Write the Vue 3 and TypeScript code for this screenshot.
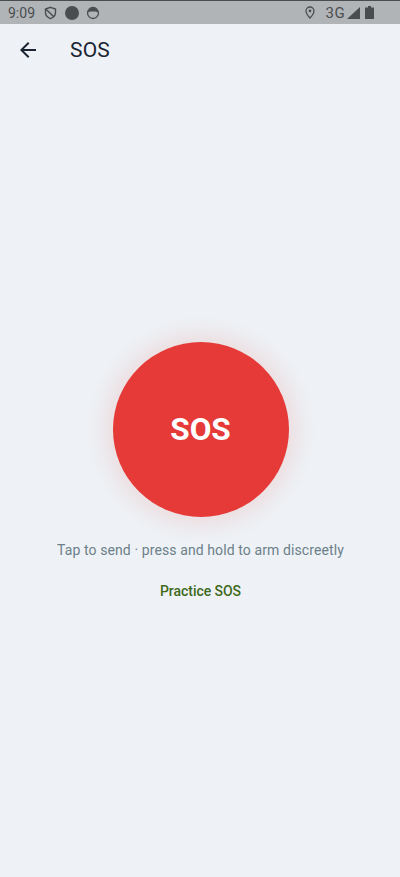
<script setup lang="ts">
const title = 'SOS'
</script>

<template>
  <div class="screen">
    <div class="status">
      <div class="status-left">
        <span class="time">9:09</span>
        <svg class="s-icon shield" width="13" height="14" viewBox="0 0 13 14">
          <path d="M6.500 1.300 11.500 3v3.600c0 2.900-2 5-5 6.100-3-1.100-5-3.200-5-6.100V3z" fill="none" stroke="#4a4d50" stroke-width="1.400" />
          <path d="M2 3.200 9.800 10.800" stroke="#4a4d50" stroke-width="1.400" />
        </svg>
        <span class="dot"></span>
        <svg class="s-icon" width="14" height="14" viewBox="0 0 14 14">
          <circle cx="7" cy="7" r="5.500" fill="none" stroke="#4a4d50" stroke-width="1.300" />
          <path d="M2 6.300C2.400 3.500 4.500 1.800 7 1.800s4.600 1.700 5 4.500c-.9.300-1.500-.8-2.400-.8H4.400c-.9 0-1.500 1.100-2.400.8z" fill="#4a4d50" />
        </svg>
      </div>
      <div class="status-right">
        <svg width="10" height="13" viewBox="0 0 10 13">
          <path d="M5 1C2.800 1 1 2.700 1 4.900 1 7.600 5 12 5 12s4-4.400 4-7.100C9 2.700 7.200 1 5 1z" fill="none" stroke="#4a4d50" stroke-width="1.300" />
          <circle cx="5" cy="4.900" r="1.300" fill="#4a4d50" />
        </svg>
        <span class="net">3G</span>
        <svg class="signal" width="13" height="12" viewBox="0 0 13 12"><path d="M13 0V12H0z" fill="#4a4d50" /></svg>
        <svg class="battery" width="9" height="13" viewBox="0 0 9 13"><path d="M3 0h3v1.500h3V13H0V1.500h3z" fill="#4a4d50" /></svg>
      </div>
    </div>
    <header class="bar">
      <svg class="back" width="24" height="24" viewBox="0 0 24 24">
        <path d="M20 11H7.830l5.590-5.590L12 4l-8 8 8 8 1.410-1.410L7.830 13H20z" fill="#1b2433" />
      </svg>
      <span class="title">{{ title }}</span>
    </header>
    <main class="content">
      <button class="sos" type="button">SOS</button>
      <p class="hint">Tap to send · press and hold to arm discreetly</p>
      <a class="practice">Practice SOS</a>
    </main>
  </div>
</template>

<style scoped>
.screen {
  width: 400px;
  height: 877px;
  background: #eef2f6;
  display: flex;
  flex-direction: column;
  font-family: Roboto, "Liberation Sans", sans-serif;
  overflow: hidden;
}
.status {
  height: 24px;
  box-sizing: border-box;
  border-top: 1px solid #4a4c4e;
  background: #b1b4b7;
  display: flex;
  justify-content: space-between;
  align-items: center;
  padding: 0 26px 0 8px;
  color: #4a4d50;
}
.status-left, .status-right { display: flex; align-items: center; }
.time { font-size: 14px; margin-right: 9px; }
.dot { width: 14px; height: 14px; border-radius: 50%; background: #4a4d50; margin: 0 7px 0 8px; }
.net { font-size: 15px; letter-spacing: 0.4px; margin: 0 2px 0 11px; }
.battery { margin-left: 5px; }
.bar {
  height: 52px;
  display: flex;
  align-items: center;
  padding-left: 16px;
}
.back { flex: none; }
.title { font-size: 21px; letter-spacing: 0.2px; color: #1b2433; margin-left: 30px; line-height: 1; }
.content {
  display: flex;
  flex-direction: column;
  align-items: center;
  padding-top: 266px;
  padding-left: 1px;
}
.sos {
  width: 176px;
  height: 175px;
  border: none;
  border-radius: 50%;
  background: #e53a37;
  color: #fff;
  font-family: inherit;
  font-size: 31.500px;
  font-weight: 700;
  box-shadow: 0 0 26px 6px rgba(229, 57, 53, 0.14);
  padding: 0;
}
.hint {
  margin: 24px 0 0;
  font-size: 14px;
  line-height: 18px;
  color: #6c8089;
  letter-spacing: 0.1px;
}
.practice {
  margin-top: 23px;
  font-size: 14px;
  line-height: 18px;
  font-weight: 500;
  color: #3f6a1c;
  letter-spacing: -0.05px;
}
</style>
